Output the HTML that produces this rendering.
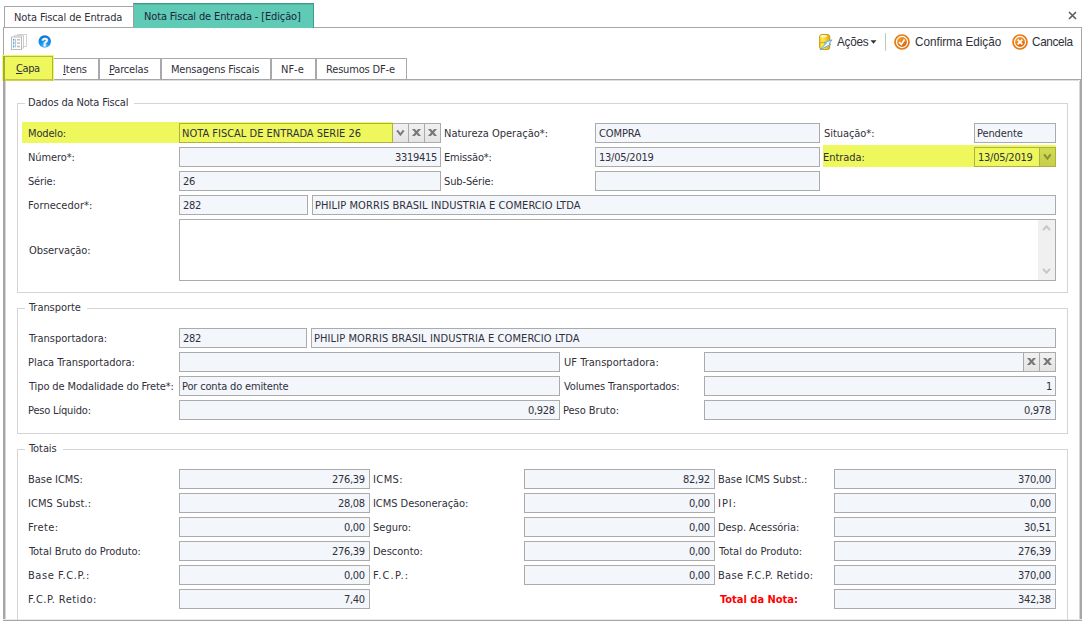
<!DOCTYPE html>
<html lang="pt-BR"><head><meta charset="utf-8"><title>Nota Fiscal de Entrada</title><style>
html,body{margin:0;padding:0;background:#fff;}
body{width:1088px;height:623px;position:relative;overflow:hidden;font-family:"DejaVu Sans Condensed","Liberation Sans",sans-serif;font-size:11px;color:#30303a;}
.a{position:absolute;box-sizing:border-box;}
.t{white-space:nowrap;}
.tb{font-family:"Liberation Sans","DejaVu Sans",sans-serif;font-size:12.1px;transform:scaleX(0.97);transform-origin:0 50%;}
.red{color:#f00;font-weight:bold;}
.b{display:flex;align-items:center;justify-content:center;}
.ic{display:block;}
u{text-decoration:underline;text-underline-offset:1px;}
</style></head><body>
<div class="a " style="left:4px;top:6px;width:130px;height:22px;background:#fff;border:1px solid #a6a6a6;"></div>
<div class="a t" id="t1" style="left:14.00px;top:7px;height:21px;line-height:21px;letter-spacing:-0.131px;">Nota Fiscal de Entrada</div>
<div class="a " style="left:133px;top:3px;width:181px;height:25px;background:#5fcbb5;border:1px solid #409c88;border-bottom:none;border-left-color:#9c9c9c;"></div>
<div class="a " style="left:134px;top:4px;width:179px;height:1px;background:#53b7a1;"></div>
<div class="a t" id="t2" style="left:144.00px;top:6px;height:21px;line-height:21px;letter-spacing:-0.148px;color:#1c2340;">Nota Fiscal de Entrada - [Edição]</div>
<svg class="a" style="left:1068px;top:11px" width="9" height="9" viewBox="0 0 9 9"><path d="M1 1 L8 8 M8 1 L1 8" stroke="#5e5e5e" stroke-width="1.6" fill="none"/></svg>
<div class="a " style="left:3px;top:27px;width:131px;height:1px;background:#a6a6a6;"></div>
<div class="a " style="left:314px;top:27px;width:768px;height:1px;background:#a6a6a6;"></div>
<div class="a " style="left:3px;top:28px;width:1px;height:52px;background:#a6a6a6;"></div>
<div class="a " style="left:3px;top:80px;width:2px;height:541px;background:#a6a6a6;"></div>
<div class="a " style="left:5px;top:81px;width:1px;height:539px;background:#d6d6d6;"></div>
<div class="a " style="left:1081px;top:27px;width:1px;height:54px;background:#a6a6a6;"></div>
<div class="a " style="left:1080px;top:80px;width:2px;height:541px;background:#a6a6a6;"></div>
<div class="a " style="left:1079px;top:81px;width:1px;height:539px;background:#d6d6d6;"></div>
<div class="a " style="left:3px;top:620px;width:1079px;height:1px;background:#a6a6a6;"></div>
<div class="a " style="left:3px;top:619px;width:1079px;height:1px;background:#ececec;"></div>
<div class="a " style="left:3px;top:79px;width:1079px;height:1px;background:#a6a6a6;"></div>
<div class="a " style="left:6px;top:80px;width:1073px;height:1px;background:#dedede;"></div>
<svg class="a" style="left:10px;top:33px" width="18" height="18" viewBox="0 0 18 18">
<rect x="7.5" y="1.5" width="9" height="12" fill="#fff" stroke="#cfcfcf" stroke-width="0.9"/>
<rect x="4.5" y="2.7" width="9" height="12.3" fill="#fbfbfb" stroke="#c8c8c8" stroke-width="0.9"/>
<rect x="1.5" y="4" width="10" height="12.5" fill="#fff" stroke="#bcbcbc" stroke-width="1"/>
<g fill="#2a9df4"><rect x="3" y="6" width="1.3" height="1.6"/><rect x="3" y="9.2" width="1.3" height="1.6"/><rect x="3" y="12.6" width="1.3" height="1.8"/></g>
<path d="M3.6 7.6v1.6M3.6 10.8v1.8" stroke="#9fd3fa" stroke-width="1"/>
<g fill="#c2c2c2"><rect x="5" y="6" width="1.1" height="8.4"/><rect x="7" y="6" width="3" height="1.6"/><rect x="7" y="9.2" width="3" height="1.6"/><rect x="7" y="12.6" width="3" height="1.8"/></g>
</svg>
<svg class="a" style="left:38px;top:35px" width="14" height="14" viewBox="0 0 14 14">
<defs><radialGradient id="hg" cx="0.5" cy="0.95" r="0.9"><stop offset="0" stop-color="#6cc8fb"/><stop offset="0.45" stop-color="#1c93ea"/><stop offset="1" stop-color="#0a78d6"/></radialGradient></defs>
<circle cx="6.75" cy="6.5" r="6.2" fill="url(#hg)"/>
<text x="6.8" y="10.9" font-family="Liberation Sans,sans-serif" font-weight="bold" font-size="11.5" text-anchor="middle" fill="#fff" stroke="#fff" stroke-width="0.4">?</text>
</svg>
<svg class="a" style="left:818px;top:33px" width="16" height="18" viewBox="0 0 16 18">
<defs><linearGradient id="yg" x1="0" y1="0" x2="1" y2="0"><stop offset="0" stop-color="#f7d22c"/><stop offset="0.3" stop-color="#ffe84a"/><stop offset="0.75" stop-color="#f0c31c"/><stop offset="1" stop-color="#d9a514"/></linearGradient></defs>
<rect x="1.6" y="1.4" width="10.2" height="15.2" rx="2.6" fill="url(#yg)" stroke="#c49a24" stroke-width="1"/>
<ellipse cx="5.6" cy="3.3" rx="3.4" ry="1.1" fill="#fffbe0" opacity="0.85"/>
<path d="M2 9.6h9.4" stroke="#d2a621" stroke-width="0.9"/>
<path d="M2.2 16.8 L8.4 10 L6.4 9.8 L14 6.8 L11 11 L12.6 11.4z" fill="#f4f9ff" stroke="#56a4ec" stroke-width="0.9"/>
</svg>
<div class="a t tb" id="t3" style="left:837.00px;top:32px;height:20px;line-height:20px;letter-spacing:-0.244px;">Ações</div>
<svg class="a" style="left:870px;top:40px" width="7" height="4" viewBox="0 0 7 4"><path d="M0.5 0.3h6L3.5 3.7z" fill="#333"/></svg>
<div class="a " style="left:885px;top:33px;width:1px;height:18px;background:#c4c4c4;"></div>
<svg class="a" style="left:894px;top:34px" width="16" height="16" viewBox="0 0 16 16">
<defs><linearGradient id="ogok" x1="0.2" y1="0" x2="0.8" y2="1"><stop offset="0" stop-color="#f5a02e"/><stop offset="1" stop-color="#dc6206"/></linearGradient></defs>
<circle cx="8" cy="8" r="7" fill="#fff" stroke="#e67a14" stroke-width="1.7"/>
<circle cx="8" cy="8" r="4.9" fill="url(#ogok)"/>
<path d="M5.1 8 L7.2 10.4 L10.6 5.4" stroke="#fff" stroke-width="1.7" fill="none"/></svg>
<div class="a t tb" id="t4" style="left:915.00px;top:32px;height:20px;line-height:20px;letter-spacing:-0.037px;">Confirma Edição</div>
<svg class="a" style="left:1012px;top:34px" width="16" height="16" viewBox="0 0 16 16">
<defs><linearGradient id="ogx" x1="0.2" y1="0" x2="0.8" y2="1"><stop offset="0" stop-color="#f5a02e"/><stop offset="1" stop-color="#dc6206"/></linearGradient></defs>
<circle cx="8" cy="8" r="7" fill="#fff" stroke="#e67a14" stroke-width="1.7"/>
<circle cx="8" cy="8" r="4.9" fill="url(#ogx)"/>
<path d="M5.6 5.6 L10.4 10.4 M10.4 5.6 L5.6 10.4" stroke="#fff" stroke-width="1.6" fill="none"/></svg>
<div class="a t tb" id="t5" style="left:1032.00px;top:32px;height:20px;line-height:20px;letter-spacing:-0.328px;">Cancela</div>
<div class="a " style="left:2px;top:55px;width:52px;height:26px;background:#eef85c;"></div>
<div class="a " style="left:3px;top:56px;width:50px;height:1px;background:#b4b944;"></div>
<div class="a " style="left:3px;top:56px;width:2px;height:25px;background:#a6aa3d;"></div>
<div class="a " style="left:52px;top:56px;width:1px;height:25px;background:#afb341;"></div>
<div class="a " style="left:5px;top:79px;width:47px;height:1px;background:#c0c549;"></div>
<div class="a " style="left:5px;top:80px;width:47px;height:1px;background:#cfd54f;"></div>
<div class="a t" id="t6" style="left:16.00px;top:59px;height:20px;line-height:20px;letter-spacing:-0.421px;"><u>C</u>apa</div>
<div class="a " style="left:54px;top:58px;width:45px;height:21px;border:1px solid #a9a9a9;border-bottom:none;border-left:none;"></div>
<div class="a t" id="t7" style="left:63.00px;top:60px;height:20px;line-height:20px;letter-spacing:-0.088px;"><u>I</u>tens</div>
<div class="a " style="left:99px;top:58px;width:62px;height:21px;border:1px solid #a9a9a9;border-bottom:none;"></div>
<div class="a t" id="t8" style="left:109.00px;top:60px;height:20px;line-height:20px;letter-spacing:-0.175px;"><u>P</u>arcelas</div>
<div class="a " style="left:161px;top:58px;width:110px;height:21px;border:1px solid #a9a9a9;border-bottom:none;"></div>
<div class="a t" id="t9" style="left:171.00px;top:60px;height:20px;line-height:20px;letter-spacing:-0.179px;">Mensagens Fiscais</div>
<div class="a " style="left:271px;top:58px;width:45px;height:21px;border:1px solid #a9a9a9;border-bottom:none;"></div>
<div class="a t" id="t10" style="left:281.00px;top:60px;height:20px;line-height:20px;">NF-e</div>
<div class="a " style="left:316px;top:58px;width:91px;height:21px;border:1px solid #a9a9a9;border-bottom:none;"></div>
<div class="a t" id="t11" style="left:326.00px;top:60px;height:20px;line-height:20px;letter-spacing:-0.171px;">Resumos DF-e</div>
<div class="a " style="left:17px;top:103px;width:1051px;height:190px;border:1px solid #d5d5d5;"></div>
<div class="a " style="left:25px;top:103px;width:109px;height:1px;background:#fff;"></div>
<div class="a t" id="t12" style="left:28.00px;top:93px;height:20px;line-height:20px;letter-spacing:-0.157px;">Dados da Nota Fiscal</div>
<div class="a " style="left:17px;top:308px;width:1051px;height:126px;border:1px solid #d5d5d5;"></div>
<div class="a " style="left:25px;top:308px;width:62px;height:1px;background:#fff;"></div>
<div class="a t" id="t13" style="left:29.00px;top:298px;height:20px;line-height:20px;letter-spacing:-0.054px;">Transporte</div>
<div class="a " style="left:17px;top:449px;width:1051px;height:171px;border:1px solid #d5d5d5;border-bottom:none;"></div>
<div class="a " style="left:25px;top:449px;width:38px;height:1px;background:#fff;"></div>
<div class="a t" id="t14" style="left:29.00px;top:439px;height:20px;line-height:20px;letter-spacing:-0.075px;">Totais</div>
<div class="a " style="left:22px;top:122px;width:371px;height:21px;background:#eef85c;"></div>
<div class="a t" id="t15" style="left:28.00px;top:124px;height:20px;line-height:20px;letter-spacing:-0.155px;">Modelo:</div>
<div class="a " style="left:179px;top:123px;width:214px;height:20px;border:1px solid #adb23f;"></div>
<div class="a t" id="t16" style="left:182.00px;top:124px;height:20px;line-height:20px;">NOTA FISCAL DE ENTRADA SERIE 26</div>
<div class="a " style="left:393px;top:124px;width:15px;height:18px;background:linear-gradient(#f1f1f1,#e4e4e4);"></div>
<div class="a " style="left:393px;top:123px;width:16px;height:1px;background:#ababab;"></div>
<div class="a " style="left:393px;top:142px;width:16px;height:1px;background:#ababab;"></div>
<div class="a " style="left:408px;top:123px;width:1px;height:20px;background:#ababab;"></div>
<div class="a" style="left:391.5px;top:122.5px;width:17px;height:20px"><svg class="a" style="left:0;top:0" width="17" height="20" viewBox="0 0 17 20"><path d="M5.1 7.4 L8.4 11.6 L11.7 7.4" stroke="#7a7a7a" stroke-width="2" fill="none"/></svg></div>
<div class="a " style="left:409px;top:124px;width:15px;height:18px;background:linear-gradient(#f1f1f1,#e4e4e4);"></div>
<div class="a " style="left:409px;top:123px;width:16px;height:1px;background:#ababab;"></div>
<div class="a " style="left:409px;top:142px;width:16px;height:1px;background:#ababab;"></div>
<div class="a " style="left:424px;top:123px;width:1px;height:20px;background:#ababab;"></div>
<div class="a" style="left:407.5px;top:122.5px;width:17px;height:20px"><svg class="a" style="left:0;top:0" width="17" height="20" viewBox="0 0 17 20"><path d="M4 6.1 h2.9 L13 12.9 h-2.9 Z" fill="#777"/><path d="M13 6.1 h-2.9 L4 12.9 h2.9 Z" fill="#777"/></svg></div>
<div class="a " style="left:425px;top:124px;width:15px;height:18px;background:linear-gradient(#f1f1f1,#e4e4e4);"></div>
<div class="a " style="left:425px;top:123px;width:16px;height:1px;background:#ababab;"></div>
<div class="a " style="left:425px;top:142px;width:16px;height:1px;background:#ababab;"></div>
<div class="a " style="left:440px;top:123px;width:1px;height:20px;background:#ababab;"></div>
<div class="a" style="left:423.5px;top:122.5px;width:17px;height:20px"><svg class="a" style="left:0;top:0" width="17" height="20" viewBox="0 0 17 20"><path d="M4 6.1 h2.9 L13 12.9 h-2.9 Z" fill="#777"/><path d="M13 6.1 h-2.9 L4 12.9 h2.9 Z" fill="#777"/></svg></div>
<div class="a t" id="t17" style="left:444.00px;top:124px;height:20px;line-height:20px;">Natureza Operação*:</div>
<div class="a f" style="left:595px;top:123px;width:225px;height:20px;background:#f3f6fb;border:1px solid #ababab;"></div>
<div class="a t" id="t18" style="left:599.00px;top:124px;height:20px;line-height:20px;letter-spacing:-0.104px;">COMPRA</div>
<div class="a t" id="t19" style="left:824.00px;top:124px;height:20px;line-height:20px;letter-spacing:-0.056px;">Situação*:</div>
<div class="a f" style="left:974px;top:123px;width:82px;height:20px;background:#f3f6fb;border:1px solid #ababab;"></div>
<div class="a t" id="t20" style="left:977.00px;top:124px;height:20px;line-height:20px;letter-spacing:-0.109px;">Pendente</div>
<div class="a t" id="t21" style="left:28.00px;top:148px;height:20px;line-height:20px;letter-spacing:-0.095px;">Número*:</div>
<div class="a f" style="left:179px;top:147px;width:262px;height:20px;background:#f3f6fb;border:1px solid #ababab;"></div>
<div class="a t" id="t22" style="left:395.00px;top:148px;height:20px;line-height:20px;letter-spacing:-0.300px;">3319415</div>
<div class="a t" id="t23" style="left:444.00px;top:148px;height:20px;line-height:20px;letter-spacing:-0.179px;">Emissão*:</div>
<div class="a f" style="left:595px;top:147px;width:225px;height:20px;background:#f3f6fb;border:1px solid #ababab;"></div>
<div class="a t" id="t24" style="left:599.00px;top:148px;height:20px;line-height:20px;letter-spacing:-0.246px;">13/05/2019</div>
<div class="a " style="left:823px;top:145px;width:233px;height:22px;background:#eef85c;"></div>
<div class="a t" id="t25" style="left:823.00px;top:148px;height:20px;line-height:20px;letter-spacing:-0.054px;">Entrada:</div>
<div class="a " style="left:974px;top:147px;width:66px;height:20px;border:1px solid #adb23f;"></div>
<div class="a t" id="t26" style="left:978.00px;top:148px;height:20px;line-height:20px;letter-spacing:-0.246px;">13/05/2019</div>
<div class="a " style="left:1040px;top:148px;width:15px;height:18px;background:linear-gradient(#d3db52,#c6ce4c);"></div>
<div class="a " style="left:1040px;top:147px;width:16px;height:1px;background:#adb23f;"></div>
<div class="a " style="left:1040px;top:166px;width:16px;height:1px;background:#adb23f;"></div>
<div class="a " style="left:1055px;top:147px;width:1px;height:20px;background:#adb23f;"></div>
<div class="a" style="left:1038.5px;top:146.5px;width:17px;height:20px"><svg class="a" style="left:0;top:0" width="17" height="20" viewBox="0 0 17 20"><path d="M5.1 7.4 L8.4 11.6 L11.7 7.4" stroke="#8a9036" stroke-width="2" fill="none"/></svg></div>
<div class="a t" id="t27" style="left:28.00px;top:172px;height:20px;line-height:20px;letter-spacing:-0.173px;">Série:</div>
<div class="a f" style="left:179px;top:171px;width:262px;height:20px;background:#f3f6fb;border:1px solid #ababab;"></div>
<div class="a t" id="t28" style="left:183.00px;top:172px;height:20px;line-height:20px;letter-spacing:-0.300px;">26</div>
<div class="a t" id="t29" style="left:444.00px;top:172px;height:20px;line-height:20px;letter-spacing:-0.134px;">Sub-Série:</div>
<div class="a f" style="left:595px;top:171px;width:225px;height:20px;background:#f3f6fb;border:1px solid #ababab;"></div>
<div class="a t" id="t30" style="left:28.00px;top:196px;height:20px;line-height:20px;letter-spacing:0.054px;">Fornecedor*:</div>
<div class="a f" style="left:179px;top:195px;width:129px;height:20px;background:#f3f6fb;border:1px solid #ababab;"></div>
<div class="a t" id="t31" style="left:183.00px;top:196px;height:20px;line-height:20px;letter-spacing:-0.300px;">282</div>
<div class="a f" style="left:312px;top:195px;width:744px;height:20px;background:#f3f6fb;border:1px solid #ababab;"></div>
<div class="a t" id="t32" style="left:315.00px;top:196px;height:20px;line-height:20px;letter-spacing:0.086px;">PHILIP MORRIS BRASIL INDUSTRIA E COMERCIO LTDA</div>
<div class="a t" id="t33" style="left:29.00px;top:241px;height:20px;line-height:20px;letter-spacing:-0.049px;">Observação:</div>
<div class="a " style="left:179px;top:219px;width:877px;height:62px;background:#fff;border:1px solid #ababab;"></div>
<div class="a " style="left:1038px;top:220px;width:17px;height:60px;background:#f0f0f0;"></div>
<svg class="a" style="left:1042px;top:225px" width="9" height="6" viewBox="0 0 9 6"><path d="M1 5.2 L4.5 1.3 L8 5.2" stroke="#c6c6c6" stroke-width="2" fill="none"/></svg>
<svg class="a" style="left:1042px;top:268px" width="9" height="6" viewBox="0 0 9 6"><path d="M1 0.8 L4.5 4.7 L8 0.8" stroke="#c6c6c6" stroke-width="2" fill="none"/></svg>
<div class="a t" id="t34" style="left:29.00px;top:329px;height:20px;line-height:20px;">Transportadora:</div>
<div class="a f" style="left:179px;top:328px;width:128px;height:20px;background:#f3f6fb;border:1px solid #ababab;"></div>
<div class="a t" id="t35" style="left:183.00px;top:329px;height:20px;line-height:20px;letter-spacing:-0.300px;">282</div>
<div class="a f" style="left:311px;top:328px;width:745px;height:20px;background:#f3f6fb;border:1px solid #ababab;"></div>
<div class="a t" id="t36" style="left:314.00px;top:329px;height:20px;line-height:20px;letter-spacing:0.086px;">PHILIP MORRIS BRASIL INDUSTRIA E COMERCIO LTDA</div>
<div class="a t" id="t37" style="left:28.00px;top:353px;height:20px;line-height:20px;letter-spacing:-0.032px;">Placa Transportadora:</div>
<div class="a f" style="left:179px;top:352px;width:381px;height:20px;background:#f3f6fb;border:1px solid #ababab;"></div>
<div class="a t" id="t38" style="left:564.00px;top:353px;height:20px;line-height:20px;letter-spacing:0.033px;">UF Transportadora:</div>
<div class="a f" style="left:704px;top:352px;width:352px;height:20px;background:#f3f6fb;border:1px solid #ababab;"></div>
<div class="a " style="left:1024px;top:353px;width:15px;height:18px;background:linear-gradient(#f1f1f1,#e4e4e4);"></div>
<div class="a " style="left:1024px;top:352px;width:16px;height:1px;background:#ababab;"></div>
<div class="a " style="left:1024px;top:371px;width:16px;height:1px;background:#ababab;"></div>
<div class="a " style="left:1039px;top:352px;width:1px;height:20px;background:#ababab;"></div>
<div class="a " style="left:1023px;top:352px;width:1px;height:20px;background:#ababab;"></div>
<div class="a" style="left:1022.5px;top:351.5px;width:17px;height:20px"><svg class="a" style="left:0;top:0" width="17" height="20" viewBox="0 0 17 20"><path d="M4 6.1 h2.9 L13 12.9 h-2.9 Z" fill="#777"/><path d="M13 6.1 h-2.9 L4 12.9 h2.9 Z" fill="#777"/></svg></div>
<div class="a " style="left:1040px;top:353px;width:15px;height:18px;background:linear-gradient(#f1f1f1,#e4e4e4);"></div>
<div class="a " style="left:1040px;top:352px;width:16px;height:1px;background:#ababab;"></div>
<div class="a " style="left:1040px;top:371px;width:16px;height:1px;background:#ababab;"></div>
<div class="a " style="left:1055px;top:352px;width:1px;height:20px;background:#ababab;"></div>
<div class="a" style="left:1038.5px;top:351.5px;width:17px;height:20px"><svg class="a" style="left:0;top:0" width="17" height="20" viewBox="0 0 17 20"><path d="M4 6.1 h2.9 L13 12.9 h-2.9 Z" fill="#777"/><path d="M13 6.1 h-2.9 L4 12.9 h2.9 Z" fill="#777"/></svg></div>
<div class="a t" id="t39" style="left:29.00px;top:377px;height:20px;line-height:20px;letter-spacing:-0.120px;">Tipo de Modalidade do Frete*:</div>
<div class="a f" style="left:179px;top:376px;width:381px;height:20px;background:#f3f6fb;border:1px solid #ababab;"></div>
<div class="a t" id="t40" style="left:182.00px;top:377px;height:20px;line-height:20px;letter-spacing:-0.164px;">Por conta do emitente</div>
<div class="a t" id="t41" style="left:564.00px;top:377px;height:20px;line-height:20px;letter-spacing:-0.119px;">Volumes Transportados:</div>
<div class="a f" style="left:704px;top:376px;width:352px;height:20px;background:#f3f6fb;border:1px solid #ababab;"></div>
<div class="a t" id="t42" style="left:1046.00px;top:377px;height:20px;line-height:20px;letter-spacing:-0.300px;">1</div>
<div class="a t" id="t43" style="left:28.00px;top:401px;height:20px;line-height:20px;letter-spacing:-0.187px;">Peso Líquido:</div>
<div class="a f" style="left:179px;top:400px;width:381px;height:20px;background:#f3f6fb;border:1px solid #ababab;"></div>
<div class="a t" id="t44" style="left:528.00px;top:401px;height:20px;line-height:20px;letter-spacing:-0.300px;">0,928</div>
<div class="a t" id="t45" style="left:563.00px;top:401px;height:20px;line-height:20px;letter-spacing:-0.035px;">Peso Bruto:</div>
<div class="a f" style="left:704px;top:400px;width:352px;height:20px;background:#f3f6fb;border:1px solid #ababab;"></div>
<div class="a t" id="t46" style="left:1024.00px;top:401px;height:20px;line-height:20px;letter-spacing:-0.300px;">0,978</div>
<div class="a t" id="t47" style="left:28.00px;top:470px;height:20px;line-height:20px;letter-spacing:-0.039px;">Base ICMS:</div>
<div class="a f" style="left:179px;top:469px;width:191px;height:20px;background:#f3f6fb;border:1px solid #ababab;"></div>
<div class="a t" id="t48" style="left:332.00px;top:470px;height:20px;line-height:20px;letter-spacing:-0.300px;">276,39</div>
<div class="a t" id="t49" style="left:373.00px;top:470px;height:20px;line-height:20px;letter-spacing:0.413px;">ICMS:</div>
<div class="a f" style="left:524px;top:469px;width:191px;height:20px;background:#f3f6fb;border:1px solid #ababab;"></div>
<div class="a t" id="t50" style="left:683.00px;top:470px;height:20px;line-height:20px;letter-spacing:-0.300px;">82,92</div>
<div class="a t" id="t51" style="left:718.00px;top:470px;height:20px;line-height:20px;">Base ICMS Subst.:</div>
<div class="a f" style="left:834px;top:469px;width:222px;height:20px;background:#f3f6fb;border:1px solid #ababab;"></div>
<div class="a t" id="t52" style="left:1018.00px;top:470px;height:20px;line-height:20px;letter-spacing:-0.300px;">370,00</div>
<div class="a t" id="t53" style="left:28.00px;top:494px;height:20px;line-height:20px;letter-spacing:0.075px;">ICMS Subst.:</div>
<div class="a f" style="left:179px;top:493px;width:191px;height:20px;background:#f3f6fb;border:1px solid #ababab;"></div>
<div class="a t" id="t54" style="left:338.00px;top:494px;height:20px;line-height:20px;letter-spacing:-0.300px;">28,08</div>
<div class="a t" id="t55" style="left:373.00px;top:494px;height:20px;line-height:20px;letter-spacing:-0.042px;">ICMS Desoneração:</div>
<div class="a f" style="left:524px;top:493px;width:191px;height:20px;background:#f3f6fb;border:1px solid #ababab;"></div>
<div class="a t" id="t56" style="left:689.00px;top:494px;height:20px;line-height:20px;letter-spacing:-0.300px;">0,00</div>
<div class="a t" id="t57" style="left:718.00px;top:494px;height:20px;line-height:20px;letter-spacing:0.976px;">IPI:</div>
<div class="a f" style="left:834px;top:493px;width:222px;height:20px;background:#f3f6fb;border:1px solid #ababab;"></div>
<div class="a t" id="t58" style="left:1030.00px;top:494px;height:20px;line-height:20px;letter-spacing:-0.300px;">0,00</div>
<div class="a t" id="t59" style="left:28.00px;top:518px;height:20px;line-height:20px;letter-spacing:0.413px;">Frete:</div>
<div class="a f" style="left:179px;top:517px;width:191px;height:20px;background:#f3f6fb;border:1px solid #ababab;"></div>
<div class="a t" id="t60" style="left:344.00px;top:518px;height:20px;line-height:20px;letter-spacing:-0.300px;">0,00</div>
<div class="a t" id="t61" style="left:373.00px;top:518px;height:20px;line-height:20px;">Seguro:</div>
<div class="a f" style="left:524px;top:517px;width:191px;height:20px;background:#f3f6fb;border:1px solid #ababab;"></div>
<div class="a t" id="t62" style="left:689.00px;top:518px;height:20px;line-height:20px;letter-spacing:-0.300px;">0,00</div>
<div class="a t" id="t63" style="left:718.00px;top:518px;height:20px;line-height:20px;letter-spacing:-0.057px;">Desp. Acessória:</div>
<div class="a f" style="left:834px;top:517px;width:222px;height:20px;background:#f3f6fb;border:1px solid #ababab;"></div>
<div class="a t" id="t64" style="left:1024.00px;top:518px;height:20px;line-height:20px;letter-spacing:-0.300px;">30,51</div>
<div class="a t" id="t65" style="left:29.00px;top:542px;height:20px;line-height:20px;letter-spacing:-0.061px;">Total Bruto do Produto:</div>
<div class="a f" style="left:179px;top:541px;width:191px;height:20px;background:#f3f6fb;border:1px solid #ababab;"></div>
<div class="a t" id="t66" style="left:332.00px;top:542px;height:20px;line-height:20px;letter-spacing:-0.300px;">276,39</div>
<div class="a t" id="t67" style="left:373.00px;top:542px;height:20px;line-height:20px;">Desconto:</div>
<div class="a f" style="left:524px;top:541px;width:191px;height:20px;background:#f3f6fb;border:1px solid #ababab;"></div>
<div class="a t" id="t68" style="left:689.00px;top:542px;height:20px;line-height:20px;letter-spacing:-0.300px;">0,00</div>
<div class="a t" id="t69" style="left:719.00px;top:542px;height:20px;line-height:20px;">Total do Produto:</div>
<div class="a f" style="left:834px;top:541px;width:222px;height:20px;background:#f3f6fb;border:1px solid #ababab;"></div>
<div class="a t" id="t70" style="left:1018.00px;top:542px;height:20px;line-height:20px;letter-spacing:-0.300px;">276,39</div>
<div class="a t" id="t71" style="left:28.00px;top:566px;height:20px;line-height:20px;letter-spacing:0.560px;">Base F.C.P.:</div>
<div class="a f" style="left:179px;top:565px;width:191px;height:20px;background:#f3f6fb;border:1px solid #ababab;"></div>
<div class="a t" id="t72" style="left:344.00px;top:566px;height:20px;line-height:20px;letter-spacing:-0.300px;">0,00</div>
<div class="a t" id="t73" style="left:373.00px;top:566px;height:20px;line-height:20px;letter-spacing:1.200px;">F.C.P.:</div>
<div class="a f" style="left:524px;top:565px;width:191px;height:20px;background:#f3f6fb;border:1px solid #ababab;"></div>
<div class="a t" id="t74" style="left:689.00px;top:566px;height:20px;line-height:20px;letter-spacing:-0.300px;">0,00</div>
<div class="a t" id="t75" style="left:718.00px;top:566px;height:20px;line-height:20px;letter-spacing:0.302px;">Base F.C.P. Retido:</div>
<div class="a f" style="left:834px;top:565px;width:222px;height:20px;background:#f3f6fb;border:1px solid #ababab;"></div>
<div class="a t" id="t76" style="left:1018.00px;top:566px;height:20px;line-height:20px;letter-spacing:-0.300px;">370,00</div>
<div class="a t" id="t77" style="left:28.00px;top:590px;height:20px;line-height:20px;letter-spacing:0.458px;">F.C.P. Retido:</div>
<div class="a f" style="left:179px;top:589px;width:191px;height:20px;background:#f3f6fb;border:1px solid #ababab;"></div>
<div class="a t" id="t78" style="left:344.00px;top:590px;height:20px;line-height:20px;letter-spacing:-0.300px;">7,40</div>
<div class="a t red" id="t79" style="left:720.00px;top:590px;height:20px;line-height:20px;">Total da Nota:</div>
<div class="a f" style="left:834px;top:589px;width:222px;height:20px;background:#f3f6fb;border:1px solid #ababab;"></div>
<div class="a t" id="t80" style="left:1018.00px;top:590px;height:20px;line-height:20px;letter-spacing:-0.300px;">342,38</div>
</body></html>
